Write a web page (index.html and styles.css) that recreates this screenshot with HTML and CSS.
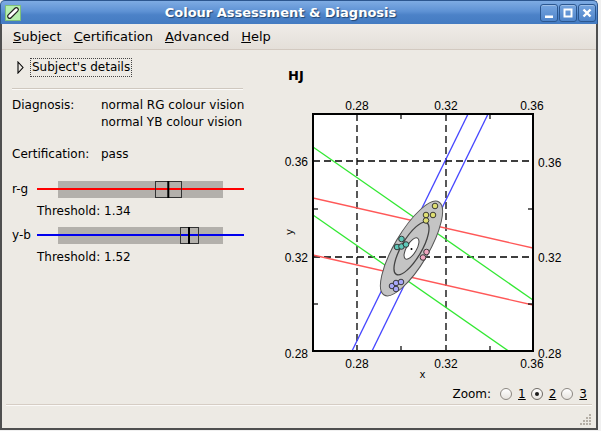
FILE: index.html
```html
<!DOCTYPE html>
<html>
<head>
<meta charset="utf-8">
<title>Colour Assessment &amp; Diagnosis</title>
<link rel="stylesheet" href="styles.css">
</head>
<body>
<div class="window">
  <div class="titlebar">
    <div class="app-icon">
      <svg width="16" height="16" viewBox="0 0 16 16">
        <rect x="0.5" y="0.5" width="15" height="15" fill="#b6f0ae" stroke="#7fbf7a"/>
        <rect x="6" y="1.3" width="4" height="13.4" rx="2" transform="rotate(45 8 8)" fill="#fff" stroke="#222" stroke-width="1.2"/>
      </svg>
    </div>
    <div class="title">Colour Assessment &amp; Diagnosis</div>
    <div class="wm-buttons">
      <div class="wm-btn"><svg width="16" height="16" viewBox="0 0 16 16"><rect x="4" y="10.5" width="8" height="2.5" fill="#fff"/></svg></div>
      <div class="wm-btn"><svg width="16" height="16" viewBox="0 0 16 16"><rect x="4.5" y="4.5" width="7" height="7" fill="none" stroke="#fff" stroke-width="2"/></svg></div>
      <div class="wm-btn"><svg width="16" height="16" viewBox="0 0 16 16"><path d="M4.5 4.5 L11.5 11.5 M11.5 4.5 L4.5 11.5" stroke="#fff" stroke-width="2.4"/></svg></div>
    </div>
  </div>
  <div class="client">
    <div class="menubar">
      <span class="menu-item"><u>S</u>ubject</span>
      <span class="menu-item"><u>C</u>ertification</span>
      <span class="menu-item"><u>A</u>dvanced</span>
      <span class="menu-item"><u>H</u>elp</span>
    </div>
    <div class="content">
      <div class="left">
        <div class="expander">
          <svg class="arrow" width="7" height="13" viewBox="0 0 7 13"><path d="M1 1 L6 6.5 L1 12 Z" fill="none" stroke="#000" stroke-width="1.1"/></svg>
          <span class="exp-label">Subject's details</span>
        </div>
        <div class="sep"></div>
        <div class="info">
          <div>Diagnosis:</div>
          <div>normal RG colour vision<br>normal YB colour vision</div>
          <div>Certification:</div>
          <div>pass</div>
        </div>
        <div class="bar-row first">
          <span class="bar-label">r-g</span>
          <svg width="207" height="17" viewBox="0 0 207 17">
            <rect x="21" y="0" width="165" height="17" fill="#b3b0ab"/>
            <line x1="0" y1="8" x2="207" y2="8" stroke="#ff0000" stroke-width="2"/>
            <rect x="118.5" y="0.5" width="26" height="16" fill="none" stroke="#333"/>
            <line x1="131.3" y1="0" x2="131.3" y2="17" stroke="#000" stroke-width="2"/>
          </svg>
        </div>
        <div class="threshold">Threshold: 1.34</div>
        <div class="bar-row">
          <span class="bar-label">y-b</span>
          <svg width="207" height="17" viewBox="0 0 207 17">
            <rect x="21" y="0" width="165" height="17" fill="#b3b0ab"/>
            <line x1="0" y1="8" x2="207" y2="8" stroke="#0000ee" stroke-width="2"/>
            <rect x="143.5" y="0.5" width="18" height="16" fill="none" stroke="#333"/>
            <line x1="152" y1="0" x2="152" y2="17" stroke="#000" stroke-width="2"/>
          </svg>
        </div>
        <div class="threshold">Threshold: 1.52</div>
      </div>
      <div class="right">
        <div class="subject-id">HJ</div>
        <svg class="plot" width="316" height="285" viewBox="280 95 316 285">
          <defs>
            <clipPath id="plotclip"><rect x="313" y="114" width="220" height="237"/></clipPath>
          </defs>
          <rect x="313" y="114" width="220" height="237" fill="#fff"/>
          <g clip-path="url(#plotclip)" fill="none">
            <g stroke="#000" stroke-width="1.3" stroke-dasharray="7 4">
              <line x1="357" y1="114" x2="357" y2="351"/>
              <line x1="446" y1="114" x2="446" y2="351"/>
              <line x1="313" y1="161" x2="533" y2="161"/>
              <line x1="313" y1="257" x2="533" y2="257"/>
            </g>
            <g stroke-width="1.3">
              <line x1="313" y1="147" x2="533" y2="300" stroke="#33e833"/>
              <line x1="313" y1="215" x2="533" y2="368" stroke="#33e833"/>
              <line x1="313" y1="198" x2="533" y2="248" stroke="#ff5858"/>
              <line x1="313" y1="255" x2="533" y2="305" stroke="#ff5858"/>
              <line x1="474.9" y1="100" x2="347.6" y2="360" stroke="#4646ff"/>
              <line x1="494.9" y1="100" x2="367.6" y2="360" stroke="#4646ff"/>
            </g>
          </g>
          <g transform="rotate(-59.5 411.5 248.5)">
            <ellipse cx="411.5" cy="248.5" rx="54" ry="17" fill="#c4c4c4" stroke="#555" stroke-width="1"/>
            <ellipse cx="411.5" cy="248.5" rx="30" ry="10" fill="none" stroke="#444" stroke-width="1.3"/>
            <ellipse cx="411.5" cy="248.5" rx="12" ry="5" fill="#fff" stroke="#444" stroke-width="1"/>
          </g>
          <circle cx="411.5" cy="249" r="1" fill="#000"/>
          <g stroke="#2a2a2a" stroke-width="0.9">
            <g fill="#dede72">
              <circle cx="435" cy="206" r="2.8"/>
              <circle cx="426" cy="215" r="2.8"/>
              <circle cx="433" cy="215" r="2.8"/>
              <circle cx="426" cy="220.5" r="2.8"/>
            </g>
            <g fill="#5fc8b8">
              <circle cx="401.5" cy="239" r="2.8"/>
              <circle cx="397" cy="247" r="2.8"/>
              <circle cx="401.5" cy="246.5" r="2.8"/>
              <circle cx="406" cy="244.5" r="2.8"/>
            </g>
            <g fill="#f0a6c0">
              <circle cx="426.5" cy="252" r="2.8"/>
              <circle cx="423" cy="257.5" r="2.8"/>
            </g>
            <g fill="#a8a8f8">
              <circle cx="392" cy="286" r="2.8"/>
              <circle cx="396" cy="283" r="2.8"/>
              <circle cx="401" cy="282" r="2.8"/>
              <circle cx="396" cy="289" r="2.8"/>
            </g>
          </g>
          <rect x="313" y="114" width="220" height="237" fill="none" stroke="#000" stroke-width="2"/>
          <g stroke="#000" stroke-width="1.2">
            <line x1="401" y1="114" x2="401" y2="119"/>
            <line x1="490" y1="114" x2="490" y2="119"/>
            <line x1="401" y1="346" x2="401" y2="351"/>
            <line x1="490" y1="346" x2="490" y2="351"/>
            <line x1="313" y1="209" x2="318" y2="209"/>
            <line x1="313" y1="304" x2="318" y2="304"/>
            <line x1="528" y1="209" x2="533" y2="209"/>
            <line x1="528" y1="304" x2="533" y2="304"/>
          </g>
          <g class="tick">
            <text x="357" y="109.5" text-anchor="middle">0.28</text>
            <text x="446" y="109.5" text-anchor="middle">0.32</text>
            <text x="532" y="109.5" text-anchor="middle">0.36</text>
            <text x="357" y="368" text-anchor="middle">0.28</text>
            <text x="446" y="368" text-anchor="middle">0.32</text>
            <text x="532" y="368" text-anchor="middle">0.36</text>
            <text x="308" y="166" text-anchor="end">0.36</text>
            <text x="308" y="262" text-anchor="end">0.32</text>
            <text x="308" y="357.5" text-anchor="end">0.28</text>
            <text x="538" y="167" text-anchor="start">0.36</text>
            <text x="538" y="262" text-anchor="start">0.32</text>
            <text x="538" y="357.5" text-anchor="start">0.28</text>
          </g>
          <text class="axis-title" x="422.5" y="378" text-anchor="middle">x</text>
          <text class="axis-title" transform="translate(293 232) rotate(-90)" text-anchor="middle">y</text>
        </svg>
        <div class="zoom-row">
          <span class="zoom-label">Zoom:</span>
          <span class="radio-item"><span class="radio"></span><u>1</u></span>
          <span class="radio-item"><span class="radio checked"><span class="dot"></span></span><u>2</u></span>
          <span class="radio-item"><span class="radio"></span><u>3</u></span>
        </div>
      </div>
    </div>
    <div class="statusbar">
      <svg class="grip" width="12" height="12" viewBox="0 0 12 12">
        <g fill="#b5afa6">
          <rect x="9" y="1" width="2" height="2"/>
          <rect x="6" y="4" width="2" height="2"/>
          <rect x="9" y="4" width="2" height="2"/>
          <rect x="3" y="7" width="2" height="2"/>
          <rect x="6" y="7" width="2" height="2"/>
          <rect x="9" y="7" width="2" height="2"/>
          <rect x="0" y="10" width="2" height="2"/>
          <rect x="3" y="10" width="2" height="2"/>
          <rect x="6" y="10" width="2" height="2"/>
          <rect x="9" y="10" width="2" height="2"/>
        </g>
      </svg>
    </div>
  </div>
</div>
</body>
</html>
```
FILE: styles.css
```css
html, body {
  margin: 0;
  padding: 0;
}
body {
  width: 601px;
  height: 431px;
  overflow: hidden;
  background: #f0f0f0;
  font-family: "DejaVu Sans", "Noto Sans", sans-serif;
  font-size: 12px;
  color: #000;
}
.window {
  width: 598px;
  height: 430px;
  display: flex;
  flex-direction: column;
}
.titlebar {
  height: 24px;
  box-sizing: border-box;
  display: flex;
  align-items: center;
  border: 1px solid #2c568f;
  border-bottom: none;
  border-radius: 5px 5px 0 0;
  background: linear-gradient(to bottom, #7eabe3 0%, #5e92d4 45%, #4c82c8 60%, #447bc2 100%);
}
.app-icon {
  width: 16px;
  height: 16px;
  margin-left: 4px;
  display: flex;
}
.title {
  flex: 1;
  text-align: center;
  color: #fff;
  font-weight: bold;
  font-size: 13px;
  text-shadow: 1px 1px 1px #22446e;
}
.wm-buttons {
  display: flex;
  gap: 1px;
  margin-right: 1px;
}
.wm-btn {
  width: 18px;
  height: 18px;
  box-sizing: border-box;
  border: 1px solid #2b5790;
  border-radius: 3px;
  background: linear-gradient(to bottom, #76a5df, #4e84ca);
  box-shadow: inset 0 1px 0 rgba(255, 255, 255, 0.3);
  display: flex;
  align-items: center;
  justify-content: center;
}
.client {
  flex: 1;
  min-height: 0;
  display: flex;
  flex-direction: column;
  background: #edeae4;
  border: 2px solid #4f4f4f;
  border-top: none;
}
.menubar {
  height: 25px;
  display: flex;
  align-items: center;
  padding-left: 5px;
  font-size: 13px;
  background: linear-gradient(to bottom, #efece8, #e4dfd9);
  border-bottom: 1px solid #d2c9c0;
}
.menu-item {
  padding: 0 6px;
}
.content {
  flex: 1;
  min-height: 0;
  display: flex;
  padding-left: 10px;
}
.left {
  width: 232px;
  display: flex;
  flex-direction: column;
}
.expander {
  margin-top: 8px;
  height: 19px;
  display: flex;
  align-items: center;
  padding-left: 5px;
}
.arrow {
  margin-right: 6px;
}
.exp-label {
  border: 1px dotted #444;
  padding: 0 1px;
  line-height: 17px;
}
.sep {
  margin-top: 11px;
  width: 231px;
  border-top: 1px solid #cfc8bf;
  border-bottom: 1px solid #fbfaf8;
}
.info {
  margin-top: 7px;
  display: grid;
  grid-template-columns: 89px auto;
  row-gap: 15px;
  line-height: 17px;
  white-space: nowrap;
}
.bar-row {
  margin-top: 7px;
  height: 17px;
  display: flex;
  align-items: center;
}
.bar-row.first {
  margin-top: 18px;
}
.bar-label {
  width: 25px;
  line-height: 17px;
}
.threshold {
  margin-top: 5px;
  padding-left: 25px;
  line-height: 17px;
}
.right {
  margin-left: 36px;
  width: 316px;
  display: flex;
  flex-direction: column;
}
.subject-id {
  margin-top: 18px;
  padding-left: 8px;
  line-height: 16px;
  font-weight: bold;
  font-size: 13px;
}
.plot {
  display: block;
  margin-top: 11px;
}
.tick {
  font-family: "Liberation Sans", Arial, sans-serif;
  font-size: 12px;
  fill: #000;
}
.axis-title {
  font-family: "Liberation Sans", Arial, sans-serif;
  font-size: 11px;
  fill: #000;
}
.zoom-row {
  margin-top: 5px;
  height: 17px;
  display: flex;
  align-items: center;
  justify-content: flex-end;
  padding-right: 9px;
}
.zoom-label {
  margin-right: 4px;
}
.radio-item {
  display: flex;
  align-items: center;
  gap: 6px;
  margin-left: 5px;
}
.radio {
  width: 12px;
  height: 12px;
  box-sizing: border-box;
  border-radius: 50%;
  border: 1px solid #8c8781;
  background: linear-gradient(to bottom, #ffffff, #e7e4df);
  display: flex;
  align-items: center;
  justify-content: center;
}
.radio.checked {
  border-color: #6f6a64;
}
.dot {
  width: 4px;
  height: 4px;
  border-radius: 50%;
  background: #1a1a1a;
}
.statusbar {
  height: 24px;
  margin: 0 4px;
  border-top: 1px solid #d6cdc4;
  box-shadow: inset 0 1px 0 #fbfaf8;
  display: flex;
  justify-content: flex-end;
  align-items: flex-end;
  padding: 0 0 3px 0;
  box-sizing: border-box;
}
.grip {
  display: block;
}
```
